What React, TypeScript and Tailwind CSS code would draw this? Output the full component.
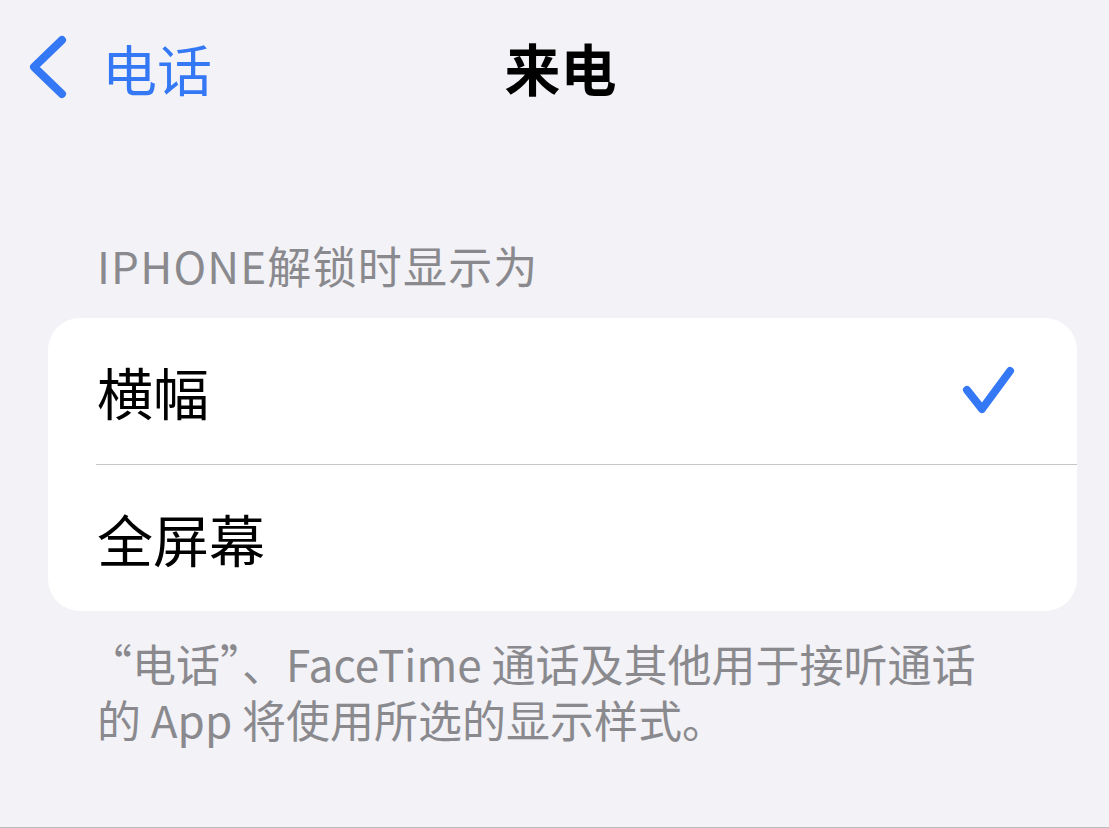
import React from 'react'

const CJK = { fontFamily: '"Noto Sans CJK SC", "Noto Sans", sans-serif' }

function BackChevron() {
  return (
    <svg width="44" height="66" viewBox="0 0 44 66" fill="none">
      <polyline points="36,6 8,33 36,60" stroke="#3478f6" strokeWidth="8" strokeLinecap="round" strokeLinejoin="round" />
    </svg>
  )
}

function Check() {
  return (
    <svg width="56" height="56" viewBox="0 0 56 56" fill="none">
      <polyline points="6,27 21,46 49,8" stroke="#3478f6" strokeWidth="8" strokeLinecap="round" strokeLinejoin="round" />
    </svg>
  )
}

const options = [
  { label: '横幅', selected: true },
  { label: '全屏幕', selected: false },
]

export default function App() {
  return (
    <div className="w-[1109px] h-[828px] flex flex-col bg-[#f2f2f7] border-b border-[#bdbdc0] overflow-hidden" style={CJK}>
      {/* 导航栏 */}
      <div className="h-[134px] grid grid-cols-[1fr_auto_1fr] items-center">
        <div className="flex items-center pl-[26px] gap-[32px]">
          <BackChevron />
          <span className="text-[55px] leading-none text-[#3478f6]">电话</span>
        </div>
        <h1 className="text-[56px] leading-none font-bold text-black pl-[12px]">来电</h1>
        <div />
      </div>

      {/* 分组标题 */}
      <div className="mt-[106px] px-[97px] text-[44px] leading-[50px] tracking-[1.2px] text-[#8a8a8e]">IPHONE解锁时显示为</div>

      {/* 选项卡片 */}
      <div className="mt-[28px] ml-[48px] mr-[32px] bg-white rounded-[32px] overflow-hidden">
        {options.map((opt, i) => (
          <div key={opt.label}>
            {i > 0 && <div className="ml-[48px] h-px bg-[#c6c6c8]" />}
            <div className="h-[146px] flex items-center justify-between pl-[49px] pr-[60px]">
              <span className="text-[56px] leading-none text-black">{opt.label}</span>
              {opt.selected && <Check />}
            </div>
          </div>
        ))}
      </div>

      {/* 说明文字 */}
      <div className="mt-[24px] pl-[88px] text-[44px] text-[#8a8a8e]">
        <div className="h-[56px] leading-[56px]">“电话”、FaceTime 通话及其他用于接听通话</div>
        <div className="h-[56px] leading-[56px] pl-[9px]">的 App 将使用所选的显示样式。</div>
      </div>
    </div>
  )
}
